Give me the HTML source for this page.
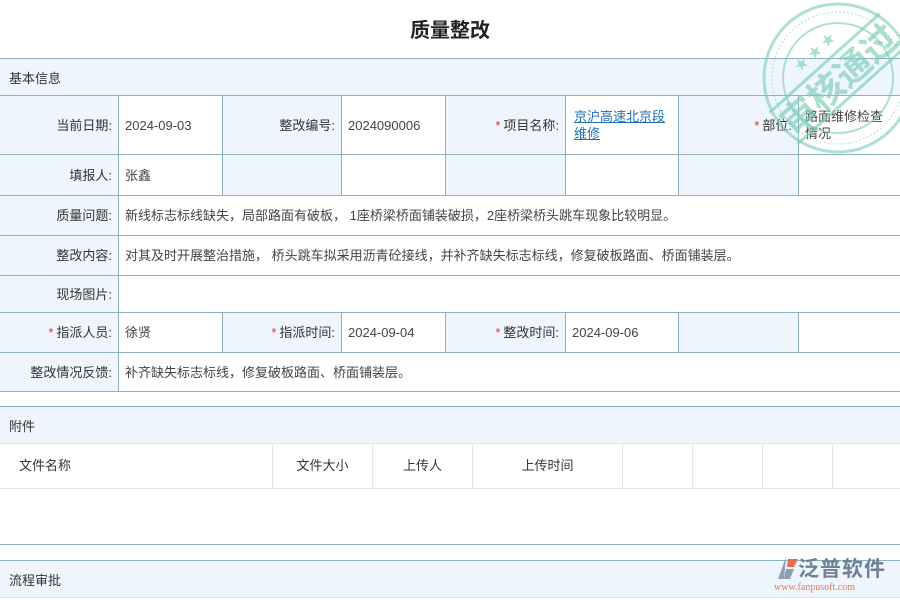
<!DOCTYPE html>
<html><head><meta charset="utf-8"><style>
*{margin:0;padding:0;box-sizing:border-box}
body{width:900px;height:600px;overflow:hidden;background:#fff;position:relative;font-family:"Liberation Sans","Noto Sans CJK SC",sans-serif;font-size:13px;color:#333}
.c{position:absolute;border-right:1px solid #8fb0c0;border-bottom:1px solid #8fb0c0;display:flex;align-items:center;padding:0 6px;line-height:17px}
.l{background:#eef5fc;justify-content:flex-end;padding-right:6px}
.v{background:#fff;color:#444}
.s{color:#e03030;margin-right:3px}
.band{position:absolute;left:0;width:900px;background:#eef5fc;display:flex;align-items:center;padding-left:9px}
a{color:#1f6db5;text-decoration:underline}
</style></head><body>
<div style="position:absolute;top:14px;left:0;width:900px;text-align:center;font-size:20px;font-weight:bold;color:#222">质量整改</div>
<div class="band" style="top:58px;height:38px;border-top:1px solid #8fb0c0;border-bottom:1px solid #8fb0c0">基本信息</div>

<div class="c l" style="left:0;top:96px;width:119px;height:59px">当前日期:</div>
<div class="c v" style="left:119px;top:96px;width:104px;height:59px">2024-09-03</div>
<div class="c l" style="left:223px;top:96px;width:119px;height:59px">整改编号:</div>
<div class="c v" style="left:342px;top:96px;width:104px;height:59px">2024090006</div>
<div class="c l" style="left:446px;top:96px;width:120px;height:59px"><span class="s">*</span>项目名称:</div>
<div class="c v" style="left:566px;top:96px;width:113px;height:59px;padding-left:8px"><a>京沪高速北京段维修</a></div>
<div class="c l" style="left:679px;top:96px;width:120px;height:59px"><span class="s">*</span>部位:</div>
<div class="c v" style="left:799px;top:96px;width:101px;height:59px;border-right:none">路面维修检查情况</div>

<div class="c l" style="left:0;top:155px;width:119px;height:41px">填报人:</div>
<div class="c v" style="left:119px;top:155px;width:104px;height:41px">张鑫</div>
<div class="c l" style="left:223px;top:155px;width:119px;height:41px"></div>
<div class="c v" style="left:342px;top:155px;width:104px;height:41px"></div>
<div class="c l" style="left:446px;top:155px;width:120px;height:41px"></div>
<div class="c v" style="left:566px;top:155px;width:113px;height:41px"></div>
<div class="c l" style="left:679px;top:155px;width:120px;height:41px"></div>
<div class="c v" style="left:799px;top:155px;width:101px;height:41px;border-right:none"></div>

<div class="c l" style="left:0;top:196px;width:119px;height:40px">质量问题:</div>
<div class="c v" style="left:119px;top:196px;width:781px;height:40px;border-right:none">新线标志标线缺失，局部路面有破板， 1座桥梁桥面铺装破损，2座桥梁桥头跳车现象比较明显。</div>
<div class="c l" style="left:0;top:236px;width:119px;height:40px">整改内容:</div>
<div class="c v" style="left:119px;top:236px;width:781px;height:40px;border-right:none">对其及时开展整治措施， 桥头跳车拟采用沥青砼接线，并补齐缺失标志标线，修复破板路面、桥面铺装层。</div>
<div class="c l" style="left:0;top:276px;width:119px;height:37px">现场图片:</div>
<div class="c v" style="left:119px;top:276px;width:781px;height:37px;border-right:none"></div>

<div class="c l" style="left:0;top:313px;width:119px;height:40px"><span class="s">*</span>指派人员:</div>
<div class="c v" style="left:119px;top:313px;width:104px;height:40px">徐贤</div>
<div class="c l" style="left:223px;top:313px;width:119px;height:40px"><span class="s">*</span>指派时间:</div>
<div class="c v" style="left:342px;top:313px;width:104px;height:40px">2024-09-04</div>
<div class="c l" style="left:446px;top:313px;width:120px;height:40px"><span class="s">*</span>整改时间:</div>
<div class="c v" style="left:566px;top:313px;width:113px;height:40px">2024-09-06</div>
<div class="c l" style="left:679px;top:313px;width:120px;height:40px"></div>
<div class="c v" style="left:799px;top:313px;width:101px;height:40px;border-right:none"></div>

<div class="c l" style="left:0;top:353px;width:119px;height:39px">整改情况反馈:</div>
<div class="c v" style="left:119px;top:353px;width:781px;height:39px;border-right:none">补齐缺失标志标线，修复破板路面、桥面铺装层。</div>

<div class="band" style="top:406px;height:38px;border-top:1px solid #8fb0c0;border-bottom:1px solid #dde3e8">附件</div>
<div style="position:absolute;top:443px;left:0;width:900px;height:46px;border-bottom:1px solid #dde3e8;color:#333">
<div style="position:absolute;left:0;width:273px;height:45px;border-right:1px solid #e3e6ea;line-height:45px;padding-left:19px">文件名称</div>
<div style="position:absolute;left:273px;width:100px;height:45px;border-right:1px solid #e3e6ea;line-height:45px;text-align:center">文件大小</div>
<div style="position:absolute;left:373px;width:100px;height:45px;border-right:1px solid #e3e6ea;line-height:45px;text-align:center">上传人</div>
<div style="position:absolute;left:473px;width:150px;height:45px;border-right:1px solid #e3e6ea;line-height:45px;text-align:center">上传时间</div>
<div style="position:absolute;left:623px;width:70px;height:45px;border-right:1px solid #e3e6ea"></div>
<div style="position:absolute;left:693px;width:70px;height:45px;border-right:1px solid #e3e6ea"></div>
<div style="position:absolute;left:763px;width:70px;height:45px;border-right:1px solid #e3e6ea"></div>
</div>
<div style="position:absolute;top:544px;left:0;width:900px;border-top:1px solid #8fb0c0"></div>
<div class="band" style="top:560px;height:38px;border-top:1px solid #8fb0c0;border-bottom:1px solid #dde3e8">流程审批</div>

<div style="position:absolute;left:774px;top:553px;width:118px;height:44px">
<svg width="26" height="26" viewBox="0 0 26 26" style="position:absolute;left:0;top:2px"><path d="M12 2 L4 24 L10 24 Z" fill="#8aa0b5"/><path d="M14 4 L24 4 L20 12 L13 12 Z" fill="#e07050"/><path d="M12 14 L20 14 L16 24 L10 24 Z" fill="#8aa0b5"/></svg>
<div style="position:absolute;left:24px;top:0;font-size:21px;font-weight:bold;color:#6f8295;letter-spacing:1px">泛普软件</div>
<div style="position:absolute;left:0;top:29px;font-size:10px;color:#e07a5a;font-family:'Liberation Serif',serif">www.fanpusoft.com</div>
</div>

<svg width="900" height="600" style="position:absolute;left:0;top:0;pointer-events:none" viewBox="0 0 900 600">
<g opacity="0.6" fill="none" stroke="#7ccdb8">
<circle cx="838" cy="78" r="74" stroke-width="3"/>
<circle cx="838" cy="78" r="66" stroke-width="1" stroke-dasharray="2 2"/>
<circle cx="838" cy="78" r="55" stroke-width="2"/>
</g>
<g transform="rotate(-42 838 78)" opacity="0.65">
<line x1="764" y1="58" x2="912" y2="58" stroke="#7ccdb8" stroke-width="3"/>
<line x1="764" y1="100" x2="912" y2="100" stroke="#7ccdb8" stroke-width="3"/>
<text x="838" y="93" text-anchor="middle" font-size="36" font-weight="bold" fill="#7ccdb8" font-family="Liberation Sans,Noto Sans CJK SC,sans-serif">审核通过</text>
<text x="838" y="48" text-anchor="middle" font-size="14" fill="#7ccdb8">★ ★ ★</text>
</g>
</svg>
</body></html>
